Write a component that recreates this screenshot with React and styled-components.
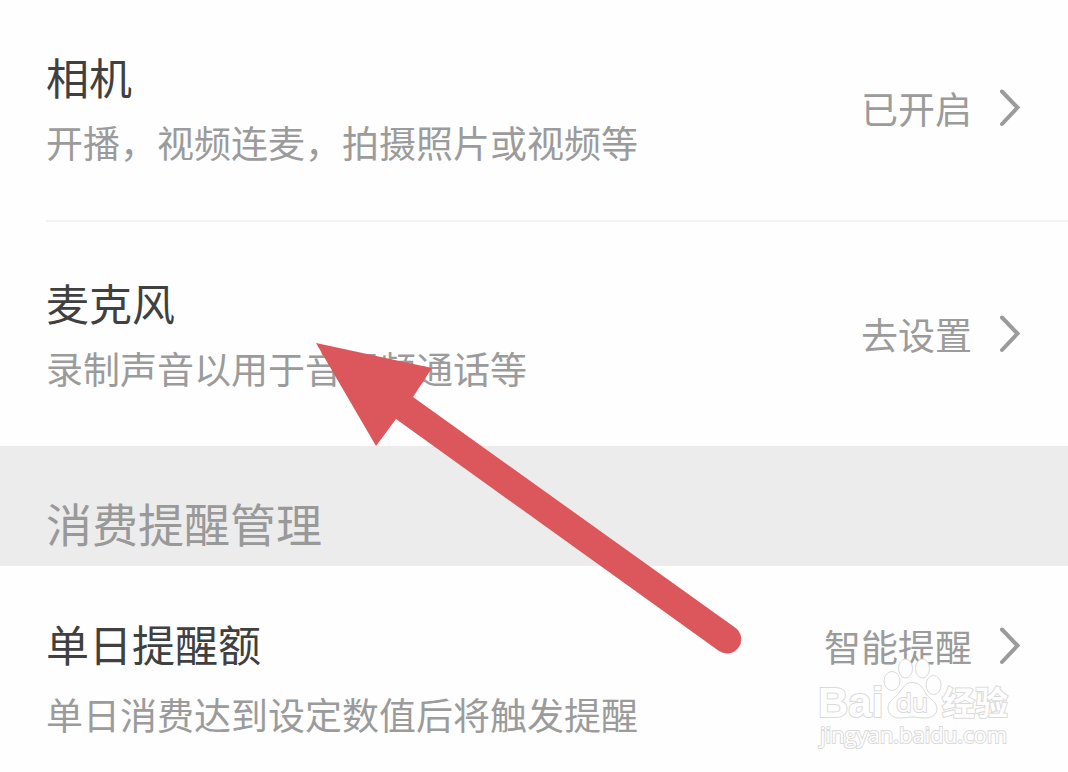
import React from "react";
import styled, { createGlobalStyle } from "styled-components";

const permissions = [
  {
    title: "相机",
    desc: "开播，视频连麦，拍摄照片或视频等",
    status: "已开启",
  },
  {
    title: "麦克风",
    desc: "录制声音以用于音视频通话等",
    status: "去设置",
  },
];

const Chevron = () => (
  <svg width="24" height="40" viewBox="0 0 24 40" fill="none" aria-hidden="true">
    <path
      d="M4 3.500L19.500 19.500L4 36"
      stroke="#9b9b9b"
      strokeWidth="4"
      strokeLinecap="round"
    />
  </svg>
);

const Arrow = () => (
  <ArrowSvg width="428" height="312" viewBox="0 0 428 312" aria-hidden="true">
    <path
      d="M0 0L116 25L97 54L419 284.500A14 14 0 0 1 403 308L80 76L60 103Z"
      fill="#db575c"
    />
  </ArrowSvg>
);

const Watermark = () => (
  <WatermarkSvg width="200" height="92" viewBox="0 0 200 92">
    <g fill="#fefefe" stroke="#dadada" strokeWidth="1">
      <ellipse cx="76" cy="23" rx="8" ry="9.500" />
      <ellipse cx="89.500" cy="10.500" rx="7" ry="9.500" />
      <ellipse cx="106.500" cy="10.500" rx="7" ry="9.500" />
      <ellipse cx="117.500" cy="27" rx="7.500" ry="9.500" />
      <path d="M96 24.500C104 24.500 107 30 110 36C113 41 121 43 121 51C121 57 115 60 109 60C104 60 100 59 96 59C92 59 88 60 83 60C77 60 72 56 72 50C72 43 79 40 83 35C87 30 89 24.500 96 24.500Z" />
    </g>
    <Outlined x="2" y="59" $size={42} $weight={700} $latin>
      Bai
    </Outlined>
    <Outlined x="80" y="54" $size={26}>
      du
    </Outlined>
    <Outlined x="126" y="57" $size={33} $weight={700}>
      经验
    </Outlined>
    <Outlined x="4" y="85" $size={22}>
      jingyan.baidu.com
    </Outlined>
  </WatermarkSvg>
);

const Setting = ({ title, desc, status, top, last }) => (
  <Item>
    <Row type="button" $top={top} $last={last}>
      <Info $last={last}>
        <Title>{title}</Title>
        <Desc>{desc}</Desc>
      </Info>
      <Status $last={last}>
        {status}
        <Chevron />
      </Status>
    </Row>
  </Item>
);

const App = () => {
  return (
    <Page>
      <GlobalStyle />
      <List>
        {permissions.map((item, index) => (
          <Setting key={item.title} {...item} top={index === 0 ? 46 : 50} />
        ))}
      </List>
      <SectionTitle>消费提醒管理</SectionTitle>
      <List>
        <Setting
          title="单日提醒额"
          desc="单日消费达到设定数值后将触发提醒"
          status="智能提醒"
          top={47}
          last
        />
      </List>
      <Arrow />
      <Watermark />
    </Page>
  );
};

const GlobalStyle = createGlobalStyle`
  * {
    margin: 0;
    padding: 0;
    box-sizing: border-box;
  }
  body {
    background-color: #fefefe;
    font-family: "Noto Sans CJK SC", sans-serif;
  }
`;

const Page = styled.main`
  position: relative;
  overflow: hidden;
`;

const List = styled.ul`
  list-style: none;
`;

const Item = styled.li`
  &:not(:last-child) {
    margin-left: 46px;
    border-bottom: 2px solid #f3f3f3;
    button {
      padding-left: 0;
    }
  }
`;

const Row = styled.button`
  width: 100%;
  display: flex;
  justify-content: space-between;
  align-items: ${({ $last }) => ($last ? "flex-start" : "center")};
  padding: ${({ $top, $last }) => `${$top}px 46px ${$last ? 28 : 50}px`};
  border: none;
  background: none;
  font-family: inherit;
  text-align: left;
  cursor: pointer;
`;

const Info = styled.span`
  display: flex;
  flex-direction: column;
  gap: ${({ $last }) => ($last ? "13px" : "8px")};
`;

const Title = styled.span`
  font-size: 43px;
  line-height: 60px;
  color: #404040;
`;

const Desc = styled.span`
  font-size: 37px;
  line-height: 56px;
  color: #9b9b9b;
`;

const Status = styled.span`
  display: flex;
  align-items: center;
  gap: 26px;
  font-size: 37px;
  line-height: ${({ $last }) => ($last ? "66px" : "56px")};
  color: #9b9b9b;
`;

const SectionTitle = styled.h2`
  padding: 46px 46px 14px;
  background-color: #ececec;
  font-size: 46px;
  font-weight: 400;
  line-height: 60px;
  color: #999999;
`;

const ArrowSvg = styled.svg`
  position: absolute;
  top: 343px;
  left: 316px;
  pointer-events: none;
`;

const WatermarkSvg = styled.svg`
  position: absolute;
  right: 52px;
  top: 658px;
  pointer-events: none;
`;

const Outlined = styled.text`
  font-family: ${({ $latin }) =>
    $latin
      ? `"Liberation Sans", sans-serif`
      : `"Open Sans", "Noto Sans CJK SC", sans-serif`};
  font-size: ${({ $size }) => $size}px;
  font-weight: ${({ $weight }) => $weight || 400};
  fill: #fefefe;
  stroke: #dadada;
  stroke-width: 2px;
  paint-order: stroke;
`;

export default App;
